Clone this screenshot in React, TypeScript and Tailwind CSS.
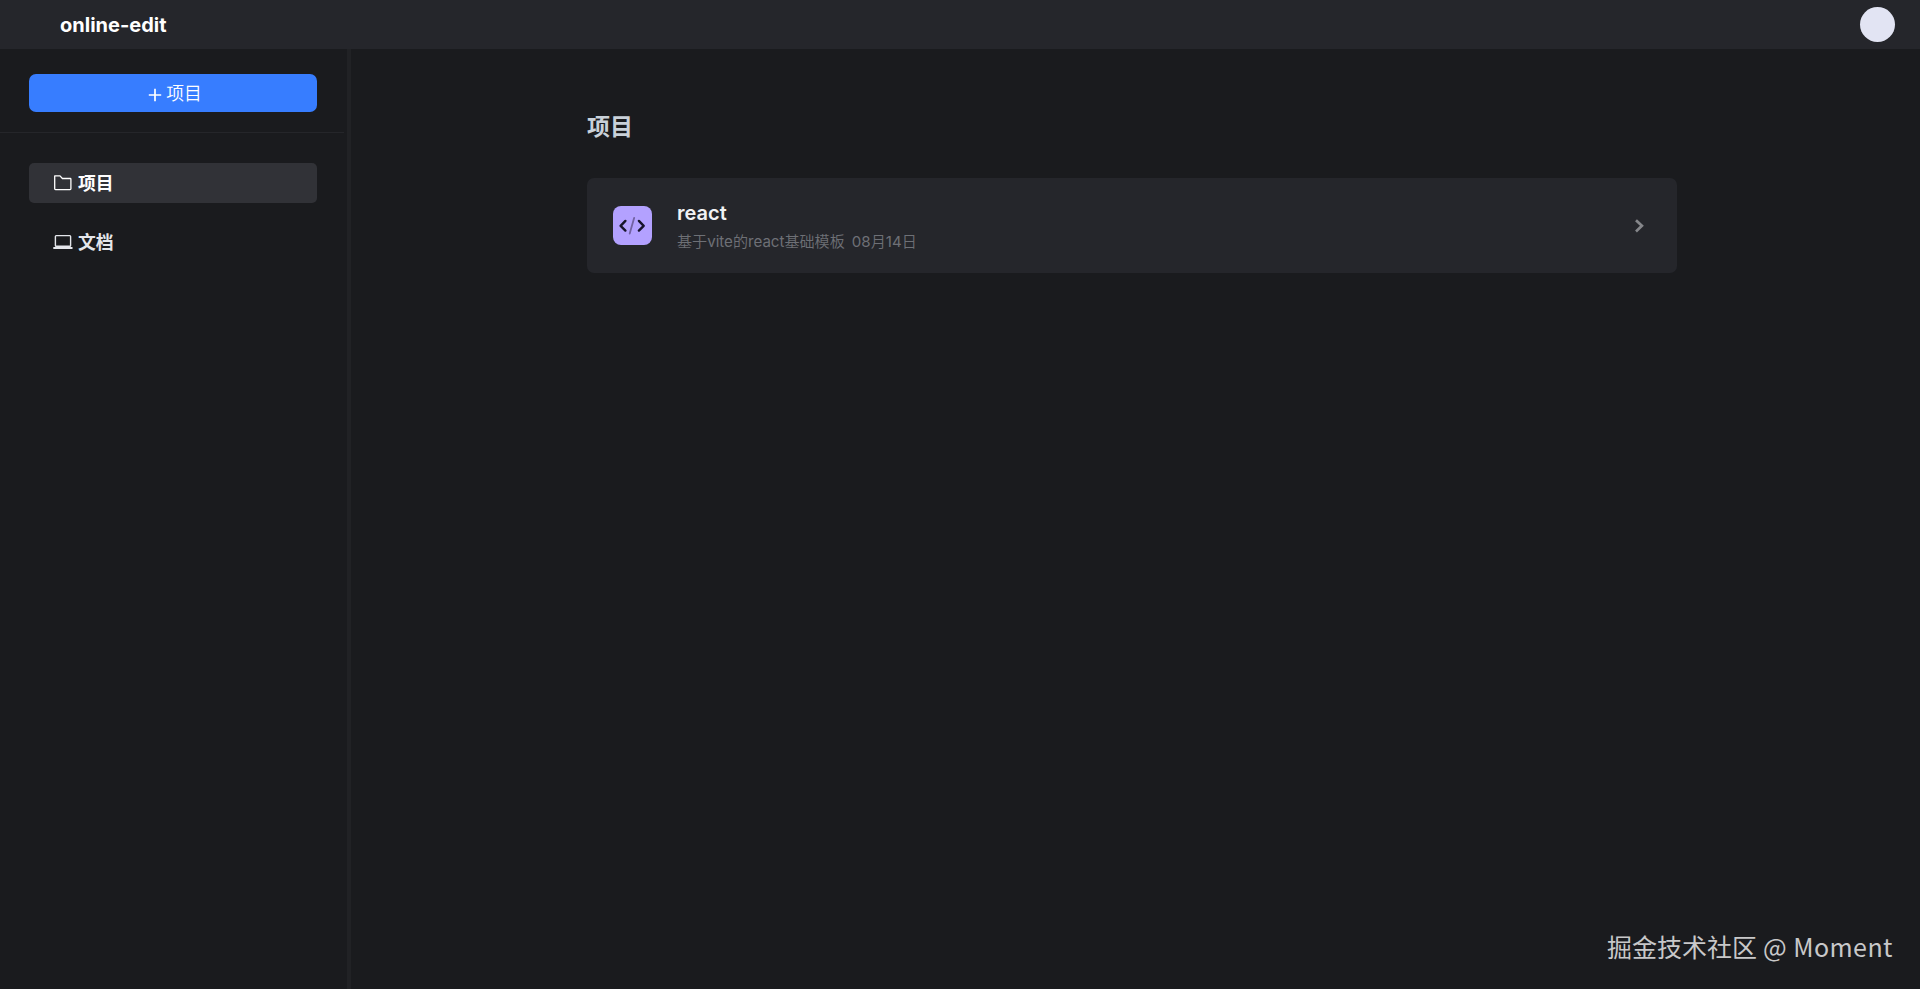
import type { ReactNode } from "react"
import clsx from "clsx"

interface NavItem {
  label: string
  icon: ReactNode
  active?: boolean
}

interface Project {
  name: string
  description: string
  date: string
}

const projects: Project[] = [
  { name: "react", description: "基于vite的react基础模板", date: "08月14日" },
]

function FolderIcon() {
  return (
    <svg width="20" height="18" viewBox="0 0 20 18" fill="none" stroke="currentColor" strokeWidth="1.3" strokeLinejoin="round">
      <path d="M1.7 1.9h5.3l2.4 2.6h7.9q.6 0 .6.7v9.6q0 .8-.8.8H2.5q-.8 0-.8-.8z" />
    </svg>
  )
}

function LaptopIcon() {
  return (
    <svg width="20" height="18" viewBox="0 0 20 18" fill="none" stroke="currentColor" strokeWidth="1.4">
      <rect x="2.4" y="2.6" width="15.2" height="10.6" rx="0.8" />
      <path d="M0.3 15h19.2" strokeWidth="2" />
    </svg>
  )
}

function CodeIcon() {
  return (
    <svg width="39" height="39" viewBox="0 0 39 39" fill="none" strokeLinecap="round" strokeLinejoin="round">
      <path d="M12.4 14.9 7.6 19.8l4.8 4.8M25.9 14.9l4.8 4.9-4.8 4.8" stroke="#17142b" strokeWidth="2.4" />
      <path d="M21.2 11.8 16.7 27.6" stroke="#7262a3" strokeWidth="1.8" />
    </svg>
  )
}

const navItems: NavItem[] = [
  { label: "项目", icon: <FolderIcon />, active: true },
  { label: "文档", icon: <LaptopIcon /> },
]

function Header() {
  return (
    <header className="flex h-[49px] shrink-0 items-center justify-between bg-[#25262b] pr-[25px] pl-[60px]">
      <h1 className="text-xl leading-none font-bold text-white">online-edit</h1>
      <div className="size-[35px] rounded-full bg-[#e2e4f3]" />
    </header>
  )
}

function Sidebar() {
  return (
    <aside className="flex w-[351px] shrink-0 flex-col border-r-4 border-[#212225]">
      <div className="mr-[3px] h-[84px] border-b border-[#25262a] pt-[25px] pr-[27px] pl-[29px]">
        <button className="flex h-[38px] w-full items-center justify-center gap-1 rounded-[7px] bg-[#377dff] pt-0.5 pl-1 font-['Inter','Noto_Sans_CJK_SC_DemiLight','Noto_Sans_CJK_SC',sans-serif] text-[17.8px] text-white">
          <svg width="14" height="14" viewBox="0 0 14 14" stroke="currentColor" strokeWidth="1.7" className="mt-0.5">
            <path d="M0.8 7h12.4M7 0.8v12.4" />
          </svg>
          项目
        </button>
      </div>
      <nav className="flex flex-col gap-[19px] pt-[30px] pr-[30px] pl-[29px]">
        {navItems.map((item) => (
          <a
            key={item.label}
            className={clsx(
              "flex h-10 items-center gap-[5px] rounded-[5px] pl-6 text-[17.8px] font-bold",
              item.active ? "bg-[#313237] text-white" : "text-[#e4e6eb]",
            )}
          >
            {item.icon}
            <span className="pt-0.5">{item.label}</span>
          </a>
        ))}
      </nav>
    </aside>
  )
}

function ProjectCard({ project }: { project: Project }) {
  return (
    <div className="flex h-[95px] items-center rounded-[7px] bg-[#25262b] pr-[31px] pl-[26px]">
      <div className="size-[39px] rounded-lg bg-[#b3a1ff]">
        <CodeIcon />
      </div>
      <div className="ml-[25px] flex-1 pt-1">
        <h3 className="text-xl leading-7 font-semibold text-[#f1f2f4]">{project.name}</h3>
        <p className="flex gap-[7px] font-['Inter','Noto_Sans_CJK_SC_DemiLight','Noto_Sans_CJK_SC',sans-serif] text-[15.1px] leading-[30px] text-[#6e7076]">
          <span>{project.description}</span>
          <span>{project.date}</span>
        </p>
      </div>
      <svg width="12" height="16" viewBox="0 0 12 16" fill="none" stroke="#85868a" strokeWidth="2.7">
        <path d="M2 2.2 7.9 7.8 2 13.4" />
      </svg>
    </div>
  )
}

export default function App() {
  return (
    <div className="relative flex h-screen flex-col overflow-hidden bg-[#1a1b1e] font-['Inter','Noto_Sans_CJK_SC',sans-serif]">
      <Header />
      <div className="flex min-h-0 flex-1">
        <Sidebar />
        <main className="flex-1 pt-[61px] pr-[243px] pl-[236px]">
          <h2 className="mb-[34px] text-[23px] leading-[34px] font-bold text-[#c9d1d9]">项目</h2>
          {projects.map((project) => (
            <ProjectCard key={project.name} project={project} />
          ))}
        </main>
      </div>
      <p className="absolute right-[27px] bottom-[25px] font-['Noto_Sans_CJK_SC',sans-serif] text-[25px] leading-9 text-[#c8c8c9]">
        掘金技术社区<span className="tracking-[0.45px]"> @ Moment</span>
      </p>
    </div>
  )
}
